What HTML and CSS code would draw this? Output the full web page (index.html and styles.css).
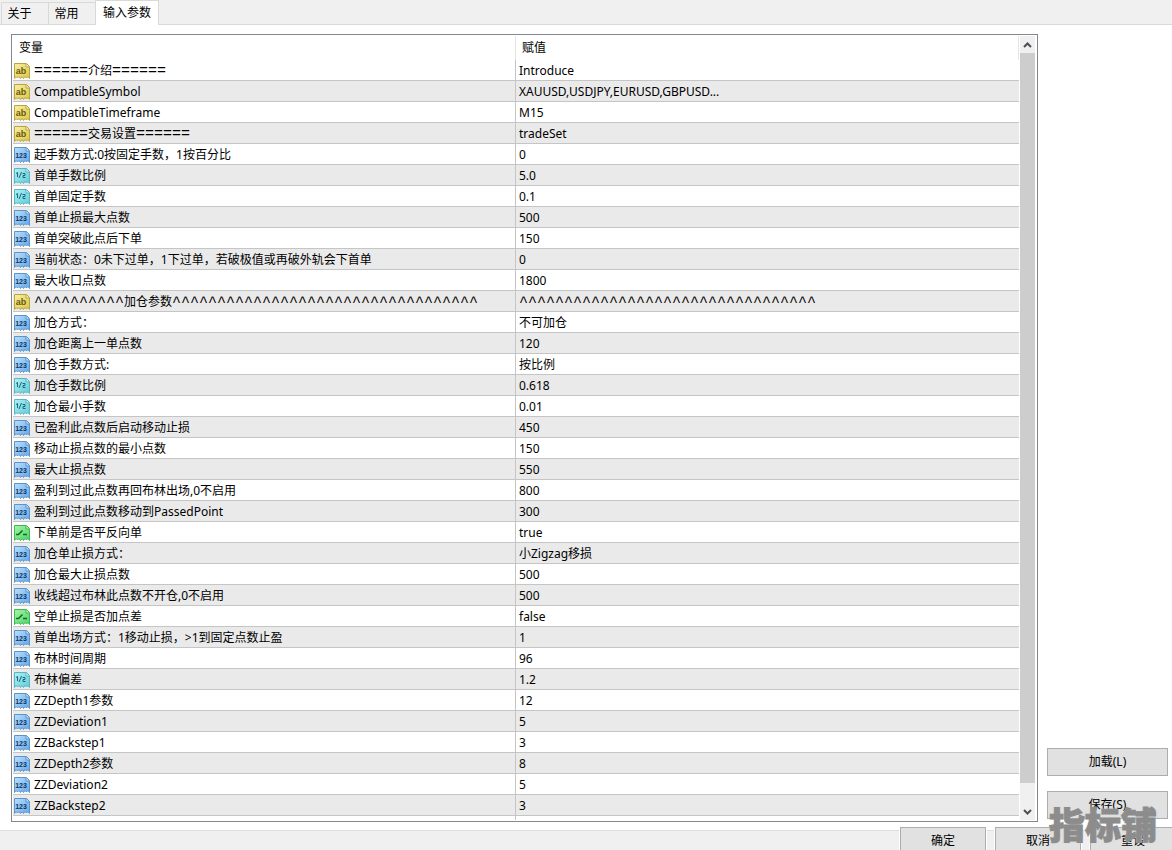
FILE: index.html
```html
<!DOCTYPE html>
<html lang="zh-CN">
<head>
<meta charset="utf-8">
<title>输入参数</title>
<link rel="stylesheet" href="styles.css">
</head>
<body>
<svg class="sprite" aria-hidden="true">
  <defs>
    <linearGradient id="g-str" x1="0" y1="0" x2="1" y2="1"><stop offset="0" stop-color="#f7f0a8"/><stop offset="1" stop-color="#dcc744"/></linearGradient>
    <linearGradient id="g-int" x1="0" y1="0" x2="1" y2="1"><stop offset="0" stop-color="#b9dffd"/><stop offset="1" stop-color="#65a8e6"/></linearGradient>
    <linearGradient id="g-dbl" x1="0" y1="0" x2="1" y2="1"><stop offset="0" stop-color="#b4f0f5"/><stop offset="1" stop-color="#5fcbd8"/></linearGradient>
    <linearGradient id="g-bool" x1="0" y1="0" x2="1" y2="1"><stop offset="0" stop-color="#a5f5a5"/><stop offset="1" stop-color="#4fd465"/></linearGradient>
    <path id="sheet" d="M.5 .5H12.5L15.5 3.5V15.5L14 13.5L12.500 15L11 13.5L9.500 15.500L8 13.500L6.500 15.500L5 13.500L3.500 15L2 13.500L.5 15.500Z"/>
    <path id="fold" d="M12 1V4H15"/>
  </defs>
  <symbol id="str" viewBox="0 0 16 16"><use href="#sheet" fill="url(#g-str)" stroke="#b9a440"/><use href="#fold" fill="#fffbd0" stroke="#b9a440"/></symbol>
  <symbol id="int" viewBox="0 0 16 16"><use href="#sheet" fill="url(#g-int)" stroke="#5b93ca"/><use href="#fold" fill="#d9efff" stroke="#5b93ca"/></symbol>
  <symbol id="dbl" viewBox="0 0 16 16"><use href="#sheet" fill="url(#g-dbl)" stroke="#58b5c3"/><use href="#fold" fill="#ddfcff" stroke="#58b5c3"/><path d="M2 5.500L3.500 4.500V9M7.500 4L5 10M8.500 5.500H11V7.500H9V9.500H11.500" fill="none" stroke="#176b7a"/></symbol>
  <symbol id="bool" viewBox="0 0 16 16"><use href="#sheet" fill="url(#g-bool)" stroke="#3fb658"/><use href="#fold" fill="#d8ffd8" stroke="#3fb658"/><path d="M2 9.500H4.500L8.500 5.500M9 9.500H13" fill="none" stroke="#0b6b27" stroke-width="1.500"/></symbol>
</svg>

<nav class="tabs">
  <button type="button" class="tab">关于</button>
  <button type="button" class="tab">常用</button>
  <button type="button" class="tab tab-active" aria-current="page">输入参数</button>
</nav>

<main class="page">
  <section class="panel">
    <div class="viewport">
      <table class="params">
        <thead><tr><th scope="col">变量</th><th scope="col">赋值</th></tr></thead>
        <tbody>
          <tr><td><svg class="icon str"><use href="#str"/><text x="7" y="11">ab</text></svg><span class="rule">======</span>介绍<span class="rule">======</span></td><td>Introduce</td></tr>
          <tr><td><svg class="icon str"><use href="#str"/><text x="7" y="11">ab</text></svg>CompatibleSymbol</td><td>XAUUSD,USDJPY,EURUSD,GBPUSD...</td></tr>
          <tr><td><svg class="icon str"><use href="#str"/><text x="7" y="11">ab</text></svg>CompatibleTimeframe</td><td>M15</td></tr>
          <tr><td><svg class="icon str"><use href="#str"/><text x="7" y="11">ab</text></svg><span class="rule">======</span>交易设置<span class="rule">======</span></td><td>tradeSet</td></tr>
          <tr><td><svg class="icon int"><use href="#int"/><text x="7" y="11">123</text></svg>起手数方式:0按固定手数，1按百分比</td><td>0</td></tr>
          <tr><td><svg class="icon"><use href="#dbl"/></svg>首单手数比例</td><td>5.0</td></tr>
          <tr><td><svg class="icon"><use href="#dbl"/></svg>首单固定手数</td><td>0.1</td></tr>
          <tr><td><svg class="icon int"><use href="#int"/><text x="7" y="11">123</text></svg>首单止损最大点数</td><td>500</td></tr>
          <tr><td><svg class="icon int"><use href="#int"/><text x="7" y="11">123</text></svg>首单突破此点后下单</td><td>150</td></tr>
          <tr><td><svg class="icon int"><use href="#int"/><text x="7" y="11">123</text></svg>当前状态：0未下过单，1下过单，若破极值或再破外轨会下首单</td><td>0</td></tr>
          <tr><td><svg class="icon int"><use href="#int"/><text x="7" y="11">123</text></svg>最大收口点数</td><td>1800</td></tr>
          <tr><td><svg class="icon str"><use href="#str"/><text x="7" y="11">ab</text></svg><span class="rule">^^^^^^^^^^</span>加仓参数<span class="rule">^^^^^^^^^^^^^^^^^^^^^^^^^^^^^^^^^^</span></td><td><span class="rule">^^^^^^^^^^^^^^^^^^^^^^^^^^^^^^^^^</span></td></tr>
          <tr><td><svg class="icon int"><use href="#int"/><text x="7" y="11">123</text></svg>加仓方式：</td><td>不可加仓</td></tr>
          <tr><td><svg class="icon int"><use href="#int"/><text x="7" y="11">123</text></svg>加仓距离上一单点数</td><td>120</td></tr>
          <tr><td><svg class="icon int"><use href="#int"/><text x="7" y="11">123</text></svg>加仓手数方式:</td><td>按比例</td></tr>
          <tr><td><svg class="icon"><use href="#dbl"/></svg>加仓手数比例</td><td>0.618</td></tr>
          <tr><td><svg class="icon"><use href="#dbl"/></svg>加仓最小手数</td><td>0.01</td></tr>
          <tr><td><svg class="icon int"><use href="#int"/><text x="7" y="11">123</text></svg>已盈利此点数后启动移动止损</td><td>450</td></tr>
          <tr><td><svg class="icon int"><use href="#int"/><text x="7" y="11">123</text></svg>移动止损点数的最小点数</td><td>150</td></tr>
          <tr><td><svg class="icon int"><use href="#int"/><text x="7" y="11">123</text></svg>最大止损点数</td><td>550</td></tr>
          <tr><td><svg class="icon int"><use href="#int"/><text x="7" y="11">123</text></svg>盈利到过此点数再回布林出场,0不启用</td><td>800</td></tr>
          <tr><td><svg class="icon int"><use href="#int"/><text x="7" y="11">123</text></svg>盈利到过此点数移动到PassedPoint</td><td>300</td></tr>
          <tr><td><svg class="icon"><use href="#bool"/></svg>下单前是否平反向单</td><td>true</td></tr>
          <tr><td><svg class="icon int"><use href="#int"/><text x="7" y="11">123</text></svg>加仓单止损方式：</td><td>小Zigzag移损</td></tr>
          <tr><td><svg class="icon int"><use href="#int"/><text x="7" y="11">123</text></svg>加仓最大止损点数</td><td>500</td></tr>
          <tr><td><svg class="icon int"><use href="#int"/><text x="7" y="11">123</text></svg>收线超过布林此点数不开仓,0不启用</td><td>500</td></tr>
          <tr><td><svg class="icon"><use href="#bool"/></svg>空单止损是否加点差</td><td>false</td></tr>
          <tr><td><svg class="icon int"><use href="#int"/><text x="7" y="11">123</text></svg>首单出场方式：1移动止损，&gt;1到固定点数止盈</td><td>1</td></tr>
          <tr><td><svg class="icon int"><use href="#int"/><text x="7" y="11">123</text></svg>布林时间周期</td><td>96</td></tr>
          <tr><td><svg class="icon"><use href="#dbl"/></svg>布林偏差</td><td>1.2</td></tr>
          <tr><td><svg class="icon int"><use href="#int"/><text x="7" y="11">123</text></svg>ZZDepth1参数</td><td>12</td></tr>
          <tr><td><svg class="icon int"><use href="#int"/><text x="7" y="11">123</text></svg>ZZDeviation1</td><td>5</td></tr>
          <tr><td><svg class="icon int"><use href="#int"/><text x="7" y="11">123</text></svg>ZZBackstep1</td><td>3</td></tr>
          <tr><td><svg class="icon int"><use href="#int"/><text x="7" y="11">123</text></svg>ZZDepth2参数</td><td>8</td></tr>
          <tr><td><svg class="icon int"><use href="#int"/><text x="7" y="11">123</text></svg>ZZDeviation2</td><td>5</td></tr>
          <tr><td><svg class="icon int"><use href="#int"/><text x="7" y="11">123</text></svg>ZZBackstep2</td><td>3</td></tr>
          <tr><td><svg class="icon"><use href="#int"/></svg></td><td></td></tr>
        </tbody>
      </table>
    </div>
    <div class="scrollbar">
      <button type="button" class="arrow" aria-label="向上滚动"><svg viewBox="0 0 9 6"><path d="M1 5L4.500 1.500L8 5"/></svg></button>
      <div class="thumb"></div>
      <button type="button" class="arrow" aria-label="向下滚动"><svg viewBox="0 0 9 6"><path d="M1 1L4.500 4.500L8 1"/></svg></button>
    </div>
  </section>
  <aside class="side">
    <button type="button" class="btn">加载(L)</button>
    <button type="button" class="btn">保存(S)</button>
  </aside>
</main>

<footer class="actions">
  <button type="button" class="btn">确定</button>
  <button type="button" class="btn">取消</button>
  <button type="button" class="btn">重设</button>
</footer>
<div class="watermark">指标铺</div>
</body>
</html>
```
FILE: styles.css
```css
* { box-sizing: border-box; }

body {
  margin: 0;
  height: 100vh;
  display: flex;
  flex-direction: column;
  position: relative;
  overflow: hidden;
  background: #fff;
  color: #000;
  font: 12px/18px "Noto Sans", "Noto Sans CJK SC", sans-serif;
}

button {
  font: inherit;
  color: inherit;
  padding: 0;
}

.sprite {
  position: absolute;
  width: 0;
  height: 0;
}

/* Tabs */
.tabs {
  flex: none;
  display: flex;
  align-items: flex-end;
  height: 25px;
  padding-left: 1px;
  background: #f0f0f0;
  border-bottom: 1px solid #d9d9d9;
}

.tab {
  height: 22px;
  width: 47px;
  padding-right: 11px;
  background: #f0f0f0;
  border: 1px solid #d9d9d9;
  border-width: 1px 0 0 1px;
}

.tab-active {
  width: 64px;
  height: 25px;
  margin-bottom: -1px;
  padding: 0;
  background: #fff;
  border-width: 1px 1px 0;
}

/* Main area */
.page {
  flex: 1;
  min-height: 0;
  display: flex;
  gap: 9px;
  padding: 9px 4px 8px 11px;
}

.panel {
  flex: 1;
  min-width: 0;
  display: flex;
  gap: 1px;
  padding: 1px;
  border: 1px solid #828790;
}

.viewport {
  flex: 1;
  min-width: 0;
  overflow: hidden;
}

.params {
  width: 100%;
  table-layout: fixed;
  border-collapse: separate;
  border-spacing: 0;
}

.params th,
.params td {
  padding: 0 0 0 3px;
  text-align: left;
  white-space: nowrap;
  overflow: hidden;
}

.params th {
  height: 24px;
  padding-left: 6px;
  font-weight: normal;
  line-height: 22px;
  border-right: 1px solid #e5e5e5;
}

.params td {
  height: 21px;
  padding-top: 2px;
  line-height: 18px;
  border-bottom: 1px solid #c5c5c5;
}

.params td:first-child {
  padding-left: 1px;
  border-right: 1px solid #c5c5c5;
}

.params tr:nth-child(even) td { background: #eaeaea; }

.icon {
  width: 16px;
  height: 16px;
  margin: 1px 4px 0 0;
  float: left;
  font: bold 7px "Liberation Sans", sans-serif;
  text-anchor: middle;
}

.icon.int { fill: #0c3566; }

.icon.str {
  fill: #6b5908;
  font-size: 9px;
}

.rule {
  font-family: "Liberation Mono", monospace;
  font-size: 15px;
  line-height: 12px;
}

.scrollbar {
  flex: none;
  width: 16px;
  display: flex;
  flex-direction: column;
  background: #f0f0f0;
  border-right: 1px solid #fff;
}

.arrow {
  height: 17px;
  display: grid;
  place-items: center;
  border: 0;
  background: none;
}

.arrow svg {
  width: 9px;
  height: 6px;
  fill: none;
  stroke: #505050;
  stroke-width: 2;
}

.thumb {
  flex: 1;
  margin-bottom: 20px;
  background: #cdcdcd;
}

/* Buttons */
.side {
  flex: none;
  width: 121px;
  display: flex;
  flex-direction: column;
  justify-content: flex-end;
  gap: 15px;
  padding-bottom: 3px;
}

.btn {
  height: 28px;
  background: #e1e1e1;
  border: 1px solid #adadad;
}

.actions {
  flex: none;
  height: 20px;
  display: flex;
  justify-content: flex-end;
  gap: 9px;
  background: #f0f0f0;
  border-top: 1px solid #dfdfdf;
}

.actions .btn {
  flex: none;
  width: 86px;
  margin-top: -4px;
  box-shadow: 0 0 0 1px #fff;
}

.actions .btn:last-child { margin-right: -4px; }

.watermark {
  position: absolute;
  right: 15px;
  bottom: 9px;
  font: 900 36px/36px "Noto Sans CJK SC", sans-serif;
  color: #8c8c8c;
  -webkit-text-stroke: 1px #8c8c8c;
  text-shadow: 0 0 1px #fff, 0 0 2px #ccc;
  pointer-events: none;
}
```
